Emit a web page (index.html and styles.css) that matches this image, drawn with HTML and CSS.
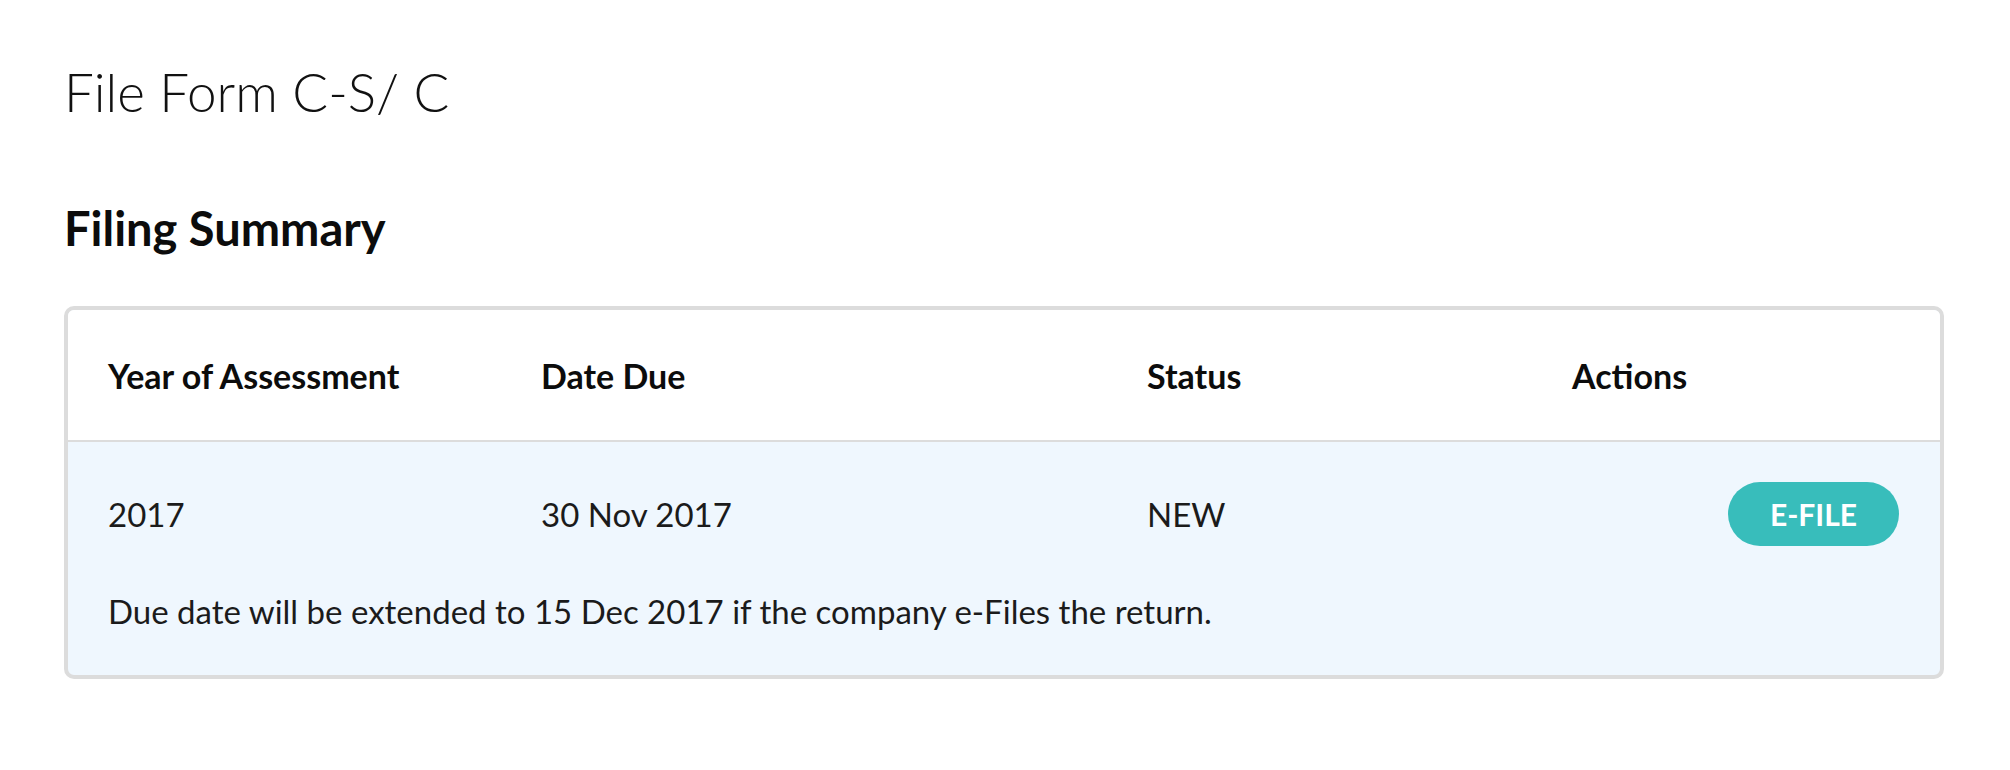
FILE: index.html
```html
<!DOCTYPE html>
<html lang="en">
<head>
<meta charset="utf-8">
<title>File Form C-S/ C</title>
<link rel="stylesheet" href="styles.css">
</head>
<body>
<main class="page">
  <h1 class="title">File Form C-S/ C</h1>
  <h2 class="section-title">Filing Summary</h2>
  <div class="card">
    <div class="row head">
      <div class="cell">Year of Assessment</div>
      <div class="cell">Date Due</div>
      <div class="cell">Status</div>
      <div class="cell">Actions</div>
    </div>
    <div class="row data">
      <div class="cell">2017</div>
      <div class="cell">30 Nov 2017</div>
      <div class="cell">NEW</div>
      <div class="cell action"><button class="btn" type="button">E-FILE</button></div>
    </div>
    <div class="note">Due date will be extended to 15 Dec 2017 if the company e-Files the return.</div>
  </div>
</main>
</body>
</html>
```

FILE: styles.css
```css
html, body {
  margin: 0;
  padding: 0;
  background: #ffffff;
}
body {
  font-family: "Lato", "Open Sans", "Liberation Sans", sans-serif;
  color: #1b1b1b;
}
.page {
  padding: 52px 66px 0 64px;
}
.title {
  margin: 0;
  font-size: 53px;
  font-weight: 300;
  line-height: 80px;
  color: #111;
}
.section-title {
  margin: 68px 0 0 0;
  font-size: 47px;
  font-weight: 700;
  line-height: 56px;
  color: #0c0c0c;
}
.card {
  margin-top: 50px;
  border: 4px solid #dcdcdc;
  border-radius: 10px;
  overflow: hidden;
  background: #eff7fe;
}
.row {
  display: grid;
  grid-template-columns: 433px 606px 425px 1fr;
  align-items: center;
}
.head {
  height: 130px;
  background: #ffffff;
  border-bottom: 2px solid #dcdcdc;
  font-weight: 700;
  font-size: 34px;
  color: #0c0c0c;
}
.data {
  height: 144px;
  font-size: 33px;
}
.cell {
  padding-left: 40px;
}
.action {
  display: flex;
  justify-content: flex-end;
  padding-right: 41px;
}
.btn {
  width: 171px;
  height: 64px;
  border: none;
  border-radius: 32px;
  background: #38bdbb;
  color: #ffffff;
  font-family: inherit;
  font-size: 30px;
  font-weight: 700;
  padding: 0;
}
.note {
  font-size: 33px;
  padding: 0 40px;
  height: 89px;
  line-height: 50px;
}
```
